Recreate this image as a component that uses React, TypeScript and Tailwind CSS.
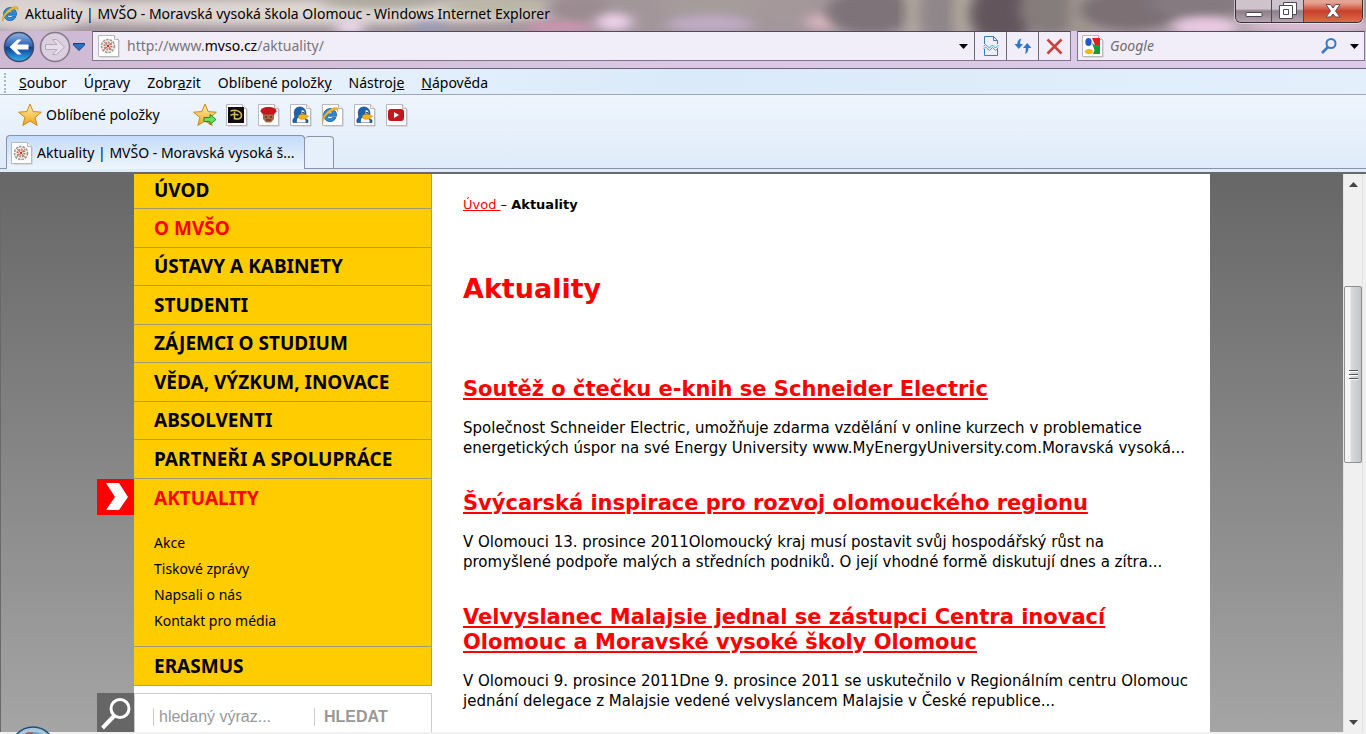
import type { ReactNode } from "react"

const uiFont = "font-['Noto_Sans','Open_Sans',sans-serif]"
const siteFont = "font-['DejaVu_Sans',sans-serif]"

type Blob = { x: number; y: number; rx: number; ry: number; fill: string }

const wallpaper: Blob[] = [
  { x: 30, y: 12, rx: 60, ry: 20, fill: "#d8cfd2" },
  { x: 270, y: 12, rx: 310, ry: 13, fill: "#ddd5d2" },
  { x: 380, y: 2, rx: 60, ry: 6, fill: "#a9a79a" },
  { x: 350, y: 27, rx: 14, ry: 7, fill: "#f0dcf0" },
  { x: 430, y: 27, rx: 18, ry: 4, fill: "#8f98bd" },
  { x: 500, y: 6, rx: 60, ry: 9, fill: "#bab7a6" },
  { x: 580, y: 10, rx: 34, ry: 14, fill: "#9b8c92" },
  { x: 560, y: 27, rx: 36, ry: 5, fill: "#d495b4" },
  { x: 650, y: 10, rx: 46, ry: 14, fill: "#a3969a" },
  { x: 614, y: 22, rx: 18, ry: 9, fill: "#ecd0ea" },
  { x: 720, y: 6, rx: 60, ry: 10, fill: "#a69c9c" },
  { x: 710, y: 24, rx: 44, ry: 9, fill: "#bfabc2" },
  { x: 790, y: 10, rx: 40, ry: 14, fill: "#a5989b" },
  { x: 822, y: 22, rx: 16, ry: 8, fill: "#d9b4bf" },
  { x: 870, y: 12, rx: 44, ry: 22, fill: "#7e7378" },
  { x: 915, y: 14, rx: 9, ry: 30, fill: "#b3aa9f" },
  { x: 940, y: 14, rx: 20, ry: 30, fill: "#90868a" },
  { x: 964, y: 14, rx: 9, ry: 30, fill: "#b3ab9d" },
  { x: 1002, y: 14, rx: 32, ry: 30, fill: "#62565b" },
  { x: 1050, y: 10, rx: 30, ry: 24, fill: "#857b7c" },
  { x: 1084, y: 12, rx: 14, ry: 26, fill: "#a0978f" },
  { x: 1130, y: 10, rx: 50, ry: 20, fill: "#7b7074" },
  { x: 1200, y: 4, rx: 50, ry: 14, fill: "#857a80" },
  { x: 1206, y: 27, rx: 34, ry: 10, fill: "#e8c9e2" },
  { x: 1310, y: 26, rx: 70, ry: 8, fill: "#d9bdd5" },
]

function Glass() {
  return (
    <svg className="absolute inset-0 w-full h-full" viewBox="0 0 1366 68" preserveAspectRatio="none" aria-hidden="true">
      <defs>
        <filter id="soft" x="-40%" y="-80%" width="180%" height="260%">
          <feGaussianBlur stdDeviation="7 4" />
        </filter>
        <linearGradient id="bar" x1="0" x2="1" y1="0" y2="0">
          <stop offset="0" stopColor="#cdb9d2" />
          <stop offset=".5" stopColor="#dac8e4" />
          <stop offset="1" stopColor="#dccbea" />
        </linearGradient>
      </defs>
      <rect width="1366" height="68" fill="#a3969c" />
      {wallpaper.map((b, i) => (
        <ellipse key={i} cx={b.x} cy={b.y} rx={b.rx} ry={b.ry} fill={b.fill} filter="url(#soft)" />
      ))}
      <rect y="31" width="1366" height="37" fill="url(#bar)" />
    </svg>
  )
}

function IeGlyph() {
  return (
    <>
      <path d="M9 2.600a6.500 6.500 0 1 0 6 9h-3.700c-.5.800-1.300 1.200-2.300 1.200-1.700 0-2.800-1-2.900-2.600h9.500C16 6 13.200 2.600 9 2.600zM6.200 7.800C6.500 6.400 7.500 5.700 9 5.700s2.500.7 2.700 2.100z" fill="#2a8ddb" stroke="#125a9e" strokeWidth=".8" />
      <path d="M2 16.500C-.5 13 4 6.500 9.500 3.200 13.500.8 17 .8 17.200 3.200c.1.800-.2 1.700-.6 2.500.3-2-1.200-2.700-4.300-1.200C7 7 1.800 12.500 2 16.500z" fill="#f0b92c" stroke="#c78a12" strokeWidth=".4" />
    </>
  )
}

function PageIcon({ children }: { children?: ReactNode }) {
  return (
    <svg width="24" height="24" viewBox="0 0 24 24" aria-hidden="true" className="shrink-0">
      <path d="M2.500 1.500h15l4 4v17h-19z" fill="#c4c2c7" transform="translate(1 1)" />
      <path d="M1.500 1.500h16l4 4v17h-20z" fill="#fff" stroke="#b9b9bd" />
      <path d="M17.500 1.500v4h4" fill="#f3f3f3" stroke="#b9b9bd" />
      {children}
    </svg>
  )
}

function Crest() {
  return (
    <>
      <circle cx="11" cy="12" r="6.500" fill="#f1ece8" stroke="#9a9795" strokeWidth="1.600" strokeDasharray="2.500 1" />
      <circle cx="11" cy="12" r="3.500" fill="#e9d5cb" stroke="#c07468" strokeWidth="2" strokeDasharray="1.500 1.200" />
      <path d="M7 8l8 8M15 8l-8 8" stroke="#a08070" strokeWidth=".8" />
      <circle cx="11" cy="12" r="1.200" fill="#c9352b" />
    </>
  )
}

function Penguin() {
  return (
    <>
      <path d="M4 19.500c-.5-2 0-4 2-5.500C4 8 6 4 11 4c4 0 6 3 6 7l-2 4 4 2v2.500z" fill="#1c62b4" stroke="#10386e" strokeWidth=".6" />
      <path d="M8 19.500c-.5-2 0-4 1.500-5.500l5 1c2 1 2.500 3 2 4.500z" fill="#f6f6f4" />
      <path d="M12.300 7.500c1-1 3.500-.5 3.500 2.500l-3.500 1.500z" fill="#fff" stroke="#10386e" strokeWidth=".4" />
      <circle cx="14" cy="9.500" r=".8" fill="#111" />
      <path d="M9.500 12.500c3-2 6-1.500 10 .5-1.500 3-7 4.500-10 2z" fill="#f7b418" stroke="#bf7607" strokeWidth=".5" />
    </>
  )
}

function Star({ arrow }: { arrow?: boolean }) {
  return (
    <svg width="24" height="24" viewBox="0 0 24 24" aria-hidden="true" className="shrink-0">
      <defs>
        <linearGradient id="gold" x1="0" y1="0" x2="0" y2="1">
          <stop offset="0" stopColor="#fff2a8" />
          <stop offset="1" stopColor="#f3a21c" />
        </linearGradient>
      </defs>
      <path d="M12 1l3.200 7.600 8.200.6-6.300 5.200 2.100 8.100L12 18l-7.200 4.500 2.100-8.100L.6 9.200l8.200-.6z" fill="url(#gold)" stroke="#c98a1b" strokeLinejoin="round" />
      {arrow && <path d="M11 14.500h6v-3l6 5-6 5v-3h-6z" fill="#6fe05a" stroke="#1f8f22" strokeLinejoin="round" />}
    </svg>
  )
}

function Caret({ color }: { color: string }) {
  return (
    <svg width="9" height="5" viewBox="0 0 9 5" aria-hidden="true" className="shrink-0">
      <path d="M0 0h9L4.500 5z" fill={color} />
    </svg>
  )
}

function TitleBar() {
  return (
    <header className="flex h-[31px] items-start">
      <div className="flex h-7 flex-1 items-center gap-1.5 pl-px">
        <svg width="18" height="18" viewBox="0 0 18 18" aria-hidden="true" className="shrink-0"><IeGlyph /></svg>
        <h1 className="text-sm text-black">Aktuality | MVŠO - Moravská vysoká škola Olomouc - Windows Internet Explorer</h1>
      </div>
      <div className="mr-[3px] flex h-[23px] w-[128px] overflow-hidden rounded-b-md border border-t-0 border-[#3d3038] shadow-[0_0_0_1px_#ffffff80]">
        <button aria-label="Minimalizovat" className="flex w-9 items-center justify-center border-r border-[#54474f] bg-linear-to-b from-[#cfc3cb] from-40% via-[#8d7e87] via-50% to-[#b4a5b0]">
          <svg width="18" height="22" viewBox="0 0 18 22"><rect x="1" y="12.500" width="16" height="4" rx="1" fill="#fff" stroke="#4b4650" /></svg>
        </button>
        <button aria-label="Obnovit" className="flex w-8 items-center justify-center border-r border-[#54474f] bg-linear-to-b from-[#cfc3cb] from-40% via-[#8d7e87] via-50% to-[#b4a5b0]">
          <svg width="20" height="20" viewBox="0 0 20 20" fill="#fff" stroke="#4b4a5c">
            <path d="M5.500 1.500h13v12h-13z" />
            <path fillRule="evenodd" d="M1.500 4.500h13v13h-13zM5.500 8.500v5h5v-5z" />
          </svg>
        </button>
        <button aria-label="Zavřít" className="flex flex-1 items-center justify-center bg-linear-to-b from-[#e5a595] from-10% via-[#c8402a] via-50% to-[#dd6a4c]">
          <svg width="18" height="18" viewBox="0 0 18 18"><path d="M2 2.500h4.500L9 6l2.500-3.500H16L11.500 9l4.500 6h-4.500L9 12l-2.500 3H2l4.500-6z" fill="#fff" stroke="#5c4950" /></svg>
        </button>
      </div>
    </header>
  )
}

function AddressBar() {
  return (
    <div className="flex h-[37px] items-start">
      <div className="flex h-8 w-[92px] items-center">
        <button aria-label="Zpět" className="ml-[3px]">
          <svg width="32" height="32" viewBox="0 0 32 32">
            <defs>
              <linearGradient id="back" x1="0" y1="0" x2="0" y2="1">
                <stop offset="0" stopColor="#8fb4e2" />
                <stop offset=".48" stopColor="#2a5fb4" />
                <stop offset=".5" stopColor="#0b3b8f" />
                <stop offset="1" stopColor="#35b4f2" />
              </linearGradient>
            </defs>
            <circle cx="16" cy="16" r="14.500" fill="url(#back)" stroke="#3f4a66" strokeWidth="1.500" />
            <path d="M6.500 16l8-7.500h4L14 13.500h11.500v5H14l4.500 5h-4z" fill="#fff" />
          </svg>
        </button>
        <button aria-label="Vpřed" className="ml-1">
          <svg width="32" height="32" viewBox="0 0 32 32">
            <circle cx="16" cy="16" r="14.500" fill="#dccfe0" stroke="#83798b" strokeWidth="1.500" />
            <path d="M25.500 16l-8-7.500h-4l4.500 5H6.500v5H18l-4.500 5h4z" fill="#e8dfec" stroke="#b5a9bb" />
          </svg>
        </button>
        <button aria-label="Poslední stránky" className="ml-0.5">
          <svg width="12" height="8" viewBox="0 0 12 8"><path d="M.5.500h11v1.500L6 7.500.5 2z" fill="#2a73c4" stroke="#163f80" /></svg>
        </button>
      </div>
      <div className="flex h-[30px] flex-1 items-center border border-t-[#52485a] border-[#7f7488] bg-[#f2eef9]">
        <label className="flex flex-1 items-center gap-1.5 pl-1">
          <PageIcon><Crest /></PageIcon>
          <span className="flex flex-1 text-sm text-[#77747c]">
            <span>http://www.</span><span className="text-black">mvso.cz</span>
            <input aria-label="Adresa" defaultValue="/aktuality/" className="flex-1 bg-transparent outline-none" />
          </span>
        </label>
        <button aria-label="Historie adres" className="px-1.5"><Caret color="#000" /></button>
        <button aria-label="Kompatibilní zobrazení" className="flex h-7 w-8 items-center justify-center border-l border-[#6f6677]">
          <svg width="16" height="20" viewBox="0 0 16 20" fill="none" stroke="#2f83bd">
            <path d="M1.500 8V.5h9l4 4V8M10.500.5v4h4M1.500 13v6.500h13V13" />
            <path d="M.5 10.500l2-2 4 3.500 3-3 3 3 3-3M.5 13l2-2 4 3.500 3-3 3 3 3-3" strokeWidth=".8" />
          </svg>
        </button>
        <button aria-label="Obnovit stránku" className="flex h-7 w-8 items-center justify-center border-l border-[#6f6677]">
          <svg width="18" height="18" viewBox="0 0 18 18" fill="#2f78c6">
            <path d="M7.500 1.500C5 2 3.500 3.500 3.200 7H.5l4.300 5L9 7H6.200C6 4.500 6.500 3 7.500 1.500z" />
            <path d="M11 17c2-.5 3.300-2.500 3.500-6h2.900L13.300 6 9 11h2.800c.1 2.500-.2 4.500-.8 6z" />
          </svg>
        </button>
        <button aria-label="Zastavit" className="flex h-7 w-8 items-center justify-center border-l border-[#6f6677]">
          <svg width="17" height="17" viewBox="0 0 17 17"><path d="M1.500 1.500l14 14M15.500 1.500l-14 14" stroke="#c8423e" strokeWidth="2.500" /></svg>
        </button>
      </div>
      <div className="ml-1.5 mr-px flex h-[30px] w-[288px] items-center border border-t-[#52485a] border-[#7f7488] bg-[#f2eef9] pl-[3px]">
        <PageIcon>
          <path d="M11 4h8v7h-5z" fill="#e2211c" />
          <path d="M11 9l3 2h5v9h-7l1.500-4z" fill="#169b3c" />
          <path d="M3 12h9v3H3z" fill="#fff" />
          <ellipse cx="7.500" cy="8" rx="3.200" ry="4" fill="#2458c5" />
          <ellipse cx="8" cy="17.500" rx="4" ry="2.500" fill="#f4b615" />
        </PageIcon>
        <input aria-label="Hledat" placeholder="Google" className="ml-[5px] min-w-0 flex-1 bg-transparent text-sm italic outline-none placeholder:text-[#6d6a70]" />
        <button aria-label="Hledat na webu">
          <svg width="18" height="18" viewBox="0 0 18 18" fill="none" stroke="#3579c7" strokeWidth="2">
            <circle cx="11" cy="6.500" r="4.500" />
            <path d="M8 10l-6 6" strokeWidth="2.600" />
          </svg>
        </button>
        <button aria-label="Poskytovatelé" className="pr-[5px] pl-3"><Caret color="#000" /></button>
      </div>
    </div>
  )
}

const menu = [
  ["", "S", "oubor"],
  ["Úp", "r", "avy"],
  ["Zobr", "a", "zit"],
  ["Oblíbené položk", "y", ""],
  ["Nástroj", "e", ""],
  ["", "N", "ápověda"],
]

function MenuBar() {
  return (
    <nav className="flex h-[27px] items-center gap-[17px] border-t border-b border-t-[#6d6176] border-b-[#a0a8b8] bg-linear-to-r from-[#eef6fe] via-[#dbeaf9] to-[#e3effb] pt-0.5 pl-1">
      <span className="-mr-1 h-5 border-l-2 border-dotted border-[#a9b4c6]" />
      {menu.map(([a, b, c]) => (
        <button key={a + b + c} className="text-sm">{a}<u>{b}</u>{c}</button>
      ))}
    </nav>
  )
}

function FavoritesBar() {
  return (
    <div className="flex h-10 items-center pl-[18px]">
      <button className="flex items-center gap-1 text-sm"><Star />Oblíbené položky</button>
      <div className="ml-[33px] flex items-center gap-2">
        <button aria-label="Přidat na panel"><Star arrow /></button>
        <button aria-label="Disney">
          <PageIcon>
            <path d="M3 4h16v16H3z" fill="#0d0c10" />
            <path d="M5.500 8c6-2 11 1 11 4.500s-4 4-7 3M9.500 8.500v8M5.500 12.500c2-1.500 5-1.500 8-.5" fill="none" stroke="#d9b565" strokeWidth="1.500" />
          </PageIcon>
        </button>
        <button aria-label="Hra">
          <PageIcon>
            <path d="M6 11h11v5l-3 3.500H9L6 16z" fill="#a8694b" />
            <path d="M3.500 8.500c0-3 3-4.500 8-4.500s8 1.500 8 4.500L17 11.500H6z" fill="#c4161c" />
            <path d="M8 14h2M13 14h2M9 17h5" stroke="#3c1d14" />
          </PageIcon>
        </button>
        <button aria-label="Tučňák"><PageIcon><Penguin /></PageIcon></button>
        <button aria-label="Internet Explorer"><PageIcon><g transform="translate(0 3)"><IeGlyph /></g></PageIcon></button>
        <button aria-label="Tučňák 2"><PageIcon><Penguin /></PageIcon></button>
        <button aria-label="YouTube">
          <PageIcon>
            <rect x="3" y="6" width="16" height="12" rx="3" fill="#c4171d" />
            <path d="M9 9l5 3-5 3z" fill="#fff" />
          </PageIcon>
        </button>
      </div>
    </div>
  )
}

function TabBar() {
  return (
    <div className="flex h-[37px] items-start">
      <div className="h-[34px] w-1.5 border-b border-[#8a93a8]" />
      <button className="flex h-[34px] w-[299px] items-center gap-[3px] rounded-t-[4px] border border-b-0 border-[#8a93a8] bg-linear-to-b from-[#c4dcfa] to-[#eef5fd] pl-[3px] text-sm">
        <PageIcon><Crest /></PageIcon>
        Aktuality | MVŠO - Moravská vysoká š...
      </button>
      <div className="flex h-[34px] flex-1 items-end border-b border-[#8a93a8]">
        <button aria-label="Nová karta" className="h-8 w-[29px] rounded-t-[4px] border border-b-0 border-l-0 border-[#8a93a8] bg-[#e6f0fb]" />
      </div>
    </div>
  )
}

const sections = [
  "ÚVOD", "O MVŠO", "ÚSTAVY A KABINETY", "STUDENTI", "ZÁJEMCI O STUDIUM",
  "VĚDA, VÝZKUM, INOVACE", "ABSOLVENTI", "PARTNEŘI A SPOLUPRÁCE",
]
const subpages = ["Akce", "Tiskové zprávy", "Napsali o nás", "Kontakt pro média"]

function Sidebar() {
  const item = "flex items-center border-b border-[#a69a6c] pl-5 text-[19px] font-bold"
  return (
    <aside className={`${uiFont} w-[298px] shrink-0`}>
      <nav className="border-r border-b border-[#b0a060] bg-[#ffcc00]">
        {sections.map((s, i) => (
          <a
            key={s}
            href="#"
            className={`${item} ${i === 0 ? "h-[35px] pb-0.5" : i % 2 ? "h-[39px]" : "h-[38px]"} ${s === "O MVŠO" ? "text-[#ff0000]" : "text-black"}`}
          >
            {s}
          </a>
        ))}
        <div className="relative border-b border-[#a69a6c] pb-3">
          <span className="absolute top-0 -left-[37px] flex h-9 w-[37px] items-center justify-center bg-[#ff0000] pl-0.5">
            <svg width="24" height="30" viewBox="0 0 24 30"><path d="M1 1h13l9 14-9 13H1l9-13z" fill="#fff" /></svg>
          </span>
          <a href="#" className="flex h-[38px] items-center pl-5 text-[19px] font-bold text-[#ff0000]">AKTUALITY</a>
          <ul className="pt-[13px] pl-5 text-sm">
            {subpages.map(s => (
              <li key={s} className="flex h-[26px] items-center"><a href="#">{s}</a></li>
            ))}
          </ul>
        </div>
        <a href="#" className="flex h-[38px] items-center pl-5 text-[19px] font-bold">ERASMUS</a>
      </nav>
      <form className="relative mt-[7px] flex h-12 items-center border border-[#cccccc] bg-white pl-[18px] font-['Liberation_Sans',sans-serif]">
        <span className="absolute -top-px -left-[38px] flex h-10 w-[37px] items-center justify-center bg-[#666666]">
          <svg width="34" height="34" viewBox="0 0 34 34" fill="none" stroke="#fff">
            <circle cx="21" cy="12.500" r="9" strokeWidth="3" />
            <path d="M15 20L3.500 32" strokeWidth="4" />
          </svg>
        </span>
        <input aria-label="Hledaný výraz" placeholder="hledaný výraz..." className="h-[18px] w-[161px] border-l border-[#cccccc] pl-[5px] text-base outline-none placeholder:text-[#999999]" />
        <button className="flex h-[18px] items-center border-l border-[#cccccc] pl-[9px] text-base font-bold text-[#999999]">HLEDAT</button>
      </form>
    </aside>
  )
}

const news = [
  {
    title: ["Soutěž o čtečku e-knih se Schneider Electric"],
    text: ["Společnost Schneider Electric, umožňuje zdarma vzdělání v online kurzech v problematice", "energetických úspor na své Energy University www.MyEnergyUniversity.com.Moravská vysoká..."],
  },
  {
    title: ["Švýcarská inspirace pro rozvoj olomouckého regionu"],
    text: ["V Olomouci 13. prosince 2011Olomoucký kraj musí postavit svůj hospodářský růst na", "promyšlené podpoře malých a středních podniků. O její vhodné formě diskutují dnes a zítra..."],
  },
  {
    title: ["Velvyslanec Malajsie jednal se zástupci Centra inovací", "Olomouc a Moravské vysoké školy Olomouc"],
    text: ["V Olomouci 9. prosince 2011Dne 9. prosince 2011 se uskutečnilo v Regionálním centru Olomouc", "jednání delegace z Malajsie vedené velvyslancem Malajsie v České republice..."],
  },
]

function Lines({ rows }: { rows: string[] }) {
  return rows.map(r => <span key={r} className="block whitespace-nowrap">{r}</span>)
}

function Article() {
  return (
    <main className={`${siteFont} min-w-0 flex-1 pt-[21px] pl-[31px]`}>
      <p className="text-[13px] leading-5"><a href="#" className="text-[#ff0000] underline">Úvod </a> – <b>Aktuality</b></p>
      <h2 className="mt-[58px] mb-[72px] text-[27px] leading-8 font-bold text-[#ff0000]">Aktuality</h2>
      {news.map(n => (
        <article key={n.title[0]} className="mb-[33px]">
          <h3 className="text-[21px] leading-[25px] font-bold text-[#ff0000]"><a href="#" className="underline"><Lines rows={n.title} /></a></h3>
          <p className="mt-4 text-[15px] leading-5 text-black"><Lines rows={n.text} /></p>
        </article>
      ))}
    </main>
  )
}

function ScrollBar() {
  return (
    <div className="flex w-5 shrink-0 flex-col items-center border-x border-[#e3e3e3] bg-[#f0f0f0]">
      <button aria-label="Nahoru" className="flex h-5 items-center">
        <svg width="9" height="5" viewBox="0 0 9 5"><path d="M0 5h9L4.500 0z" fill="#444" /></svg>
      </button>
      <div className="mt-[92px] flex h-[177px] w-[18px] flex-col items-center justify-center gap-0.5 rounded-xs border border-[#8f8f8f] bg-linear-to-r from-[#f5f5f5] from-30% via-[#d8d9dc] via-40% to-[#c4c5c9]">
        <span className="h-0.5 w-[9px] border-t border-[#555] bg-white" />
        <span className="h-0.5 w-[9px] border-t border-[#555] bg-white" />
        <span className="h-0.5 w-[9px] border-t border-[#555] bg-white" />
      </div>
      <button aria-label="Dolů" className="mt-auto flex h-5 items-center"><Caret color="#444" /></button>
    </div>
  )
}

// top edge of the start orb peeking over the window
function StartOrb() {
  return (
    <svg className="absolute bottom-0 left-3.5" width="38" height="8" viewBox="0 0 38 8" aria-hidden="true">
      <circle cx="19" cy="23" r="22" fill="#a9c6da" stroke="#1f4d77" strokeWidth="1.500" />
      <circle cx="19" cy="25" r="19" fill="#6f9bbb" />
      <path d="M11 8c2-2 5-2.500 8-1l-1 3h-8z" fill="#b5533f" />
    </svg>
  )
}

export default function App() {
  return (
    <div className={`${uiFont} relative flex h-screen flex-col overflow-hidden bg-[#f0f0f0] text-black`}>
      <div className="relative shrink-0">
        <Glass />
        <div className="relative">
          <TitleBar />
          <AddressBar />
        </div>
      </div>
      <div className="shrink-0 bg-linear-to-b from-[#f3f8fe] to-[#dfebf9]">
        <MenuBar />
        <FavoritesBar />
        <TabBar />
      </div>
      <div className="mb-0.5 flex min-h-0 flex-1 border-t-2 border-l border-[#696969] pr-[3px]">
        <div className="flex min-w-0 flex-1 justify-center overflow-hidden bg-linear-to-b from-[#676767] to-[#a5a5a5]">
          <div className="flex h-full w-[1076px] bg-white">
            <Sidebar />
            <Article />
          </div>
        </div>
        <ScrollBar />
      </div>
      <StartOrb />
    </div>
  )
}
